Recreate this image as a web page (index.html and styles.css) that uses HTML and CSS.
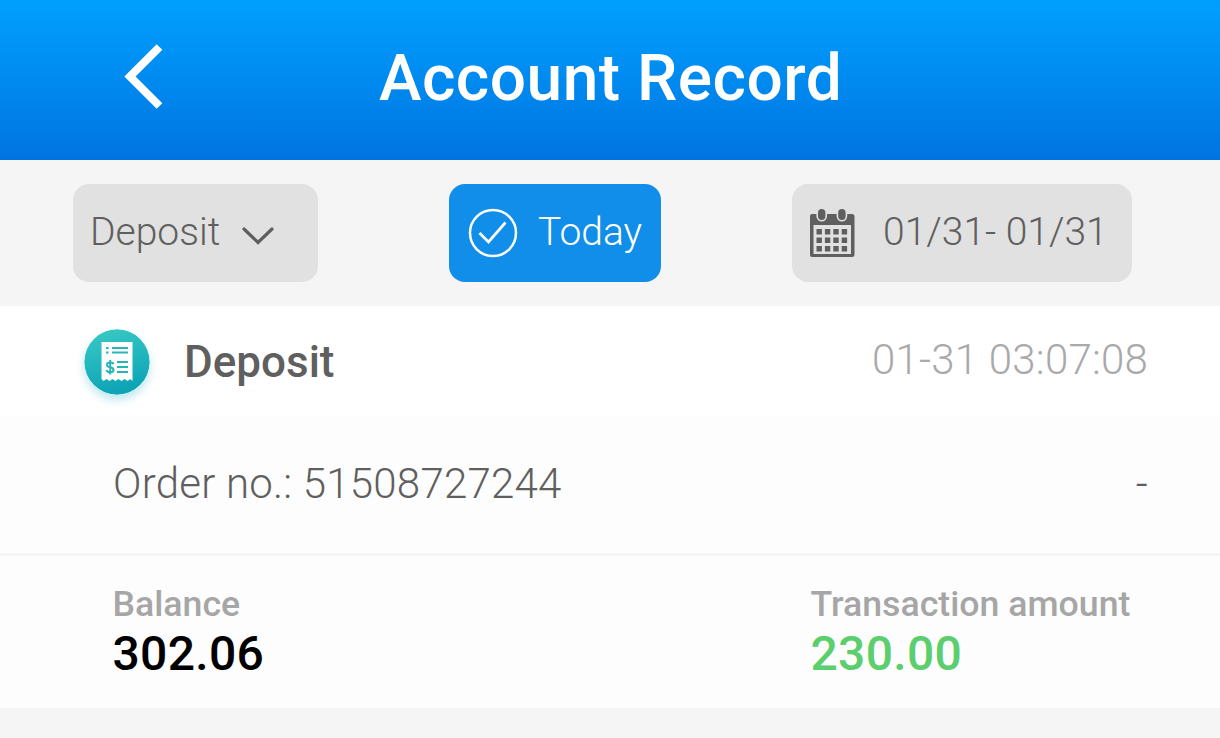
FILE: index.html
```html
<!DOCTYPE html>
<html lang="en">
<head>
<meta charset="utf-8">
<title>Account Record</title>
<link rel="stylesheet" href="styles.css">
</head>
<body>
<header class="header">
  <svg class="back" viewBox="0 0 40 66" width="40" height="66"><path d="M35.500 3L6 32.500L35.500 62" fill="none" stroke="#fff" stroke-width="8"/></svg>
  <h1 class="title">Account Record</h1>
</header>
<nav class="filters">
  <div class="filter type"><span class="type-label">Deposit</span>
    <svg class="chevron" viewBox="0 0 34 20" width="34" height="20"><path d="M3 3L17 16.500L31 3" fill="none" stroke="#5f5f5f" stroke-width="3.200" stroke-linecap="round"/></svg>
  </div>
  <div class="filter today">
    <svg class="check" viewBox="0 0 50 50" width="50" height="50" fill="none" stroke="#fff"><circle cx="25" cy="25" r="23" stroke-width="2.500"/><path d="M11.500 25L20.500 34L37.500 14.500" stroke-width="2.700"/></svg>
    <span class="today-label">Today</span>
  </div>
  <div class="filter range">
    <svg class="calendar" viewBox="0 0 46 50" width="46" height="50">
      <path fill="#5f5f5f" fill-rule="evenodd" d="M3 6H43Q45.500 6 45.500 9V47Q45.500 49 43 49H3Q1 49 1 47V9Q1 6 3 6ZM4.500 17V46H42V17Z"/>
      <g fill="#5f5f5f" stroke="#e1e1e1" stroke-width="1.600"><rect x="8.200" y="0.200" width="9" height="12.600" rx="4.500"/><rect x="28.400" y="0.200" width="9" height="12.600" rx="4.500"/></g>
      <path fill="none" stroke="#5f5f5f" stroke-width="5.400" stroke-dasharray="5.400 3" d="M7.500 23.700H38.200M7.500 32.200H38.200M7.500 40.700H38.200"/>
    </svg>
    <span class="range-label">01/31- 01/31</span>
  </div>
</nav>
<main class="record">
  <section class="summary">
    <svg class="receipt" viewBox="0 0 66 66" width="66" height="66">
      <defs><linearGradient id="teal" x1="0" y1="0" x2="0.250" y2="1"><stop offset="0" stop-color="#3bcbc5"/><stop offset="1" stop-color="#0da4b6"/></linearGradient></defs>
      <circle cx="33" cy="33" r="32.700" fill="url(#teal)"/>
      <path fill="#fff" d="M17.500 13H48.500V52L46.500 50L43.500 52L40.500 50L37.500 52L34.500 50L31.500 52L28.500 50L25.500 52L22.500 50L19.500 52L17.500 50Z"/>
      <path fill="none" stroke="#28b5b8" stroke-width="2" d="M22 19H24.500M28 19H44M22 23.500H24.500M28 23.500H44M33 33H44M33 38H44M33 43H44"/>
      <path fill="none" stroke="#28b5b8" stroke-width="2" d="M29.500 35.200Q29 33.500 26.300 33.500Q23 33.500 23 35.800Q23 37.700 26.200 38.200Q29.500 38.800 29.500 41Q29.500 43.300 26.200 43.300Q23 43.300 22.500 41M26.200 31V45.500"/>
    </svg>
    <h2 class="kind">Deposit</h2>
    <time class="time">01-31 03:07:08</time>
  </section>
  <section class="order"><span class="order-no">Order no.: 51508727244</span><span class="dash">-</span></section>
  <section class="amounts">
    <div class="balance"><div class="label">Balance</div><div class="value">302.06</div></div>
    <div class="transaction"><div class="label">Transaction amount</div><div class="value green">230.00</div></div>
  </section>
</main>
</body>
</html>
```
FILE: styles.css
```css
* { box-sizing: border-box; }
body { margin: 0; min-height: 738px; overflow: hidden; background: #f5f5f5; font-family: Roboto, sans-serif; font-weight: 300; color: #5f5f5f; white-space: nowrap; }
svg { display: block; flex: none; }
.header { height: 160px; display: grid; grid-template-columns: 379px 1fr 379px; align-items: center; background: linear-gradient(#00a0ff, #0074e0); padding-bottom: 5px; }
.back { margin: -1px 0 0 124px; }
.title { margin: 2px 0 0; font-size: 64px; font-weight: 500; line-height: 76px; letter-spacing: .5px; color: #fff; }
.filters { height: 146px; padding: 24px 88px 0 73px; display: flex; justify-content: space-between; align-items: flex-start; }
.filter { height: 98px; border-radius: 16px; background: #e1e1e1; display: flex; align-items: center; font-size: 39px; line-height: 48px; }
.filter span { margin-top: -2px; }
.type { width: 245px; padding-left: 17px; }
.chevron { margin: 5px 0 0 21px; }
.today { width: 212px; padding-left: 19px; background: #118eea; color: #fff; }
.today-label { margin-left: 20px; }
.range { width: 340px; padding-left: 17px; }
.range-label { margin-left: 28px; }
.record { background: #fdfdfd; }
.summary { height: 110px; padding: 0 72px 0 84px; display: flex; align-items: center; background: #fff; }
.receipt { margin-top: 2px; border-radius: 50%; box-shadow: 0 5px 9px rgba(20, 170, 200, .28); }
.kind { margin: 1px 0 0 34px; font-size: 44px; font-weight: 500; line-height: 52px; }
.time { margin: -3px 0 0 auto; font-size: 42px; line-height: 50px; letter-spacing: .22px; color: #a9a9a9; }
.order { height: 140px; padding: 0 72px 2px 113px; border-bottom: 3px solid #f5f5f5; display: flex; align-items: center; justify-content: space-between; font-size: 42px; line-height: 50px; letter-spacing: .22px; }
.amounts { height: 152px; padding: 26px 0 0 112.5px; display: grid; grid-template-columns: 698px 1fr; }
.label { font-size: 35.7px; font-weight: 500; line-height: 44px; color: #a6a6a6; }
.value { margin-top: -1px; font-size: 48px; font-weight: 500; line-height: 58px; letter-spacing: .3px; color: #000; }
.green { color: #5bce6d; }
```
